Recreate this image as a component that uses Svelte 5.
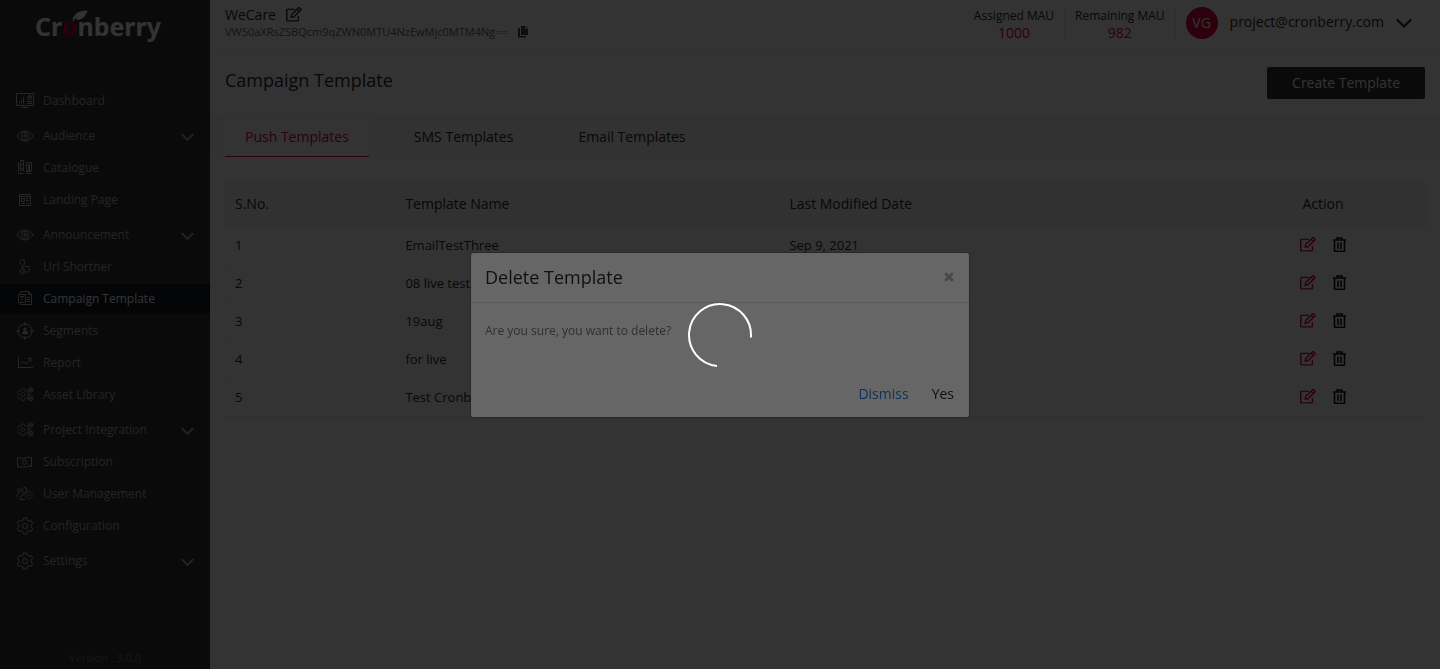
<script>
  const menu = [
    { label: 'Dashboard', icon: 'dashboard' },
    { label: 'Audience', icon: 'eye', group: true },
    { label: 'Catalogue', icon: 'catalogue' },
    { label: 'Landing Page', icon: 'landing' },
    { label: 'Announcement', icon: 'eye', group: true },
    { label: 'Url Shortner', icon: 'link' },
    { label: 'Campaign Template', icon: 'template', active: true },
    { label: 'Segments', icon: 'segments' },
    { label: 'Report', icon: 'report' },
    { label: 'Asset Library', icon: 'gears' },
    { label: 'Project Integration', icon: 'gears', group: true },
    { label: 'Subscription', icon: 'money' },
    { label: 'User Management', icon: 'users' },
    { label: 'Configuration', icon: 'gear' },
    { label: 'Settings', icon: 'gear', group: true }
  ];

  const tabs = ['Push Templates', 'SMS Templates', 'Email Templates'];
  let activeTab = $state(0);

  const rows = [
    { name: 'EmailTestThree', date: 'Sep 9, 2021' },
    { name: '08 live testing', date: '' },
    { name: '19aug', date: '' },
    { name: 'for live', date: '' },
    { name: 'Test Cronberry', date: '' }
  ];
</script>

{#snippet chevron()}
  <svg class="chevron" viewBox="0 0 16 10" aria-hidden="true"><path d="M1 1.500 8 8.500l7-7" /></svg>
{/snippet}

{#snippet pencil()}
  <svg class="pencil" viewBox="0 0 17 16" aria-hidden="true">
    <path d="M9.500 2.500H1.600a.8.8 0 0 0-.8.8V14a.8.8 0 0 0 .8.8h10.800a.8.8 0 0 0 .8-.8V9.500" />
    <path d="M5.500 10.800 6 8l7.200-7a1 1 0 0 1 1.400 0l1 1a1 1 0 0 1 0 1.400L8.400 10.400ZM11.800 2.500l2.400 2.400" />
  </svg>
{/snippet}

{#snippet cog()}
  <path d="M7.400 1h3.200l.5 2.300 1.800 1 2.200-.8 1.600 2.800L15 8v2l1.700 1.700-1.600 2.800-2.200-.8-1.800 1-.5 2.300H7.400l-.5-2.300-1.800-1-2.200.8-1.600-2.800L3 10V8L1.300 6.300l1.600-2.800 2.200.8 1.800-1Z" />
  <circle cx="9" cy="9" r="2.600" />
{/snippet}

{#snippet menuIcon(name)}
  <svg class="menu-icon" viewBox="0 0 18 18" aria-hidden="true">
    {#if name === 'dashboard'}
      <path d="M.5 1.500h17v12H.5ZM5.500 15.500h7M3.500 11.500v-2M5.500 11.500V8M7.500 11.500V5M11 9.500h5M11 11.500h5" />
      <circle cx="13.500" cy="5.500" r="2" /><path d="M13.500 3.500v2h2" />
    {:else if name === 'eye'}
      <path d="M1 9c2.200-3.300 4.900-5 8-5s5.800 1.700 8 5c-2.200 3.300-4.900 5-8 5s-5.800-1.700-8-5Z" />
      <circle cx="9" cy="9" r="3.800" /><circle cx="9" cy="9" r="1.200" /><path d="M9 6.500v2.300h2.500" />
    {:else if name === 'catalogue'}
      <path d="M4.500 1.500h3v10h-3ZM2.500 3.500v9M10.500 3.500h5v8h-5ZM12.500 5.500h1v5h-1ZM2 14.500h5.500M10 14.500h5.500M4.500 5.500h2M4.500 9.500h2M10 12.500h5" />
    {:else if name === 'landing'}
      <path d="M3.500 3.500h11v11h-11ZM3.500 5.500h11M5.500 7.500h3v3h-3ZM10 7.500h3M10 9.500h3M5.500 12.500h3M10 12.500h3" />
    {:else if name === 'link'}
      <path d="M5 6.500C3 6 3.500 3 5.500 2S9 3 8.500 5 6 8 6 8M8.500 8.500h4c1 0 1.500 4-1 5.500-2 1-3-.5-3-1.500M5 8.500c2 0 3 1 3 3.500s-.5 4.500-2 4.500-1.500-2-1.500-3.500.5-2 2-2" />
    {:else if name === 'template'}
      <path d="M4.500 3.500v-2h8l3 3v10h-11v-1M12.500 1.500v3h3M2.500 4.500h7v8h-7ZM4 6.500h4M6 6.500v4.500M11 7.500h3M11 9.500h3M11 11.500h3" />
    {:else if name === 'segments'}
      <circle cx="9" cy="9" r="7" /><path d="M9 0v4M9 14v4M0 9h4M14 9h4" />
      <path class="filled" d="M6 12c0-2 1-3.200 3-3.200s3 1.200 3 3.200ZM9 5.300a1.600 1.600 0 1 1 0 3.200 1.600 1.600 0 0 1 0-3.200Z" />
    {:else if name === 'report'}
      <path d="M2.500 3v10.500H17M5 10l2.500-2.500L10 10l4.500-5M11.500 4.500H15V8" />
    {:else if name === 'gears'}
      <g transform="translate(.5 2.200) scale(.72)">{@render cog()}</g>
      <circle cx="14.800" cy="4" r="2.200" /><circle cx="14.800" cy="4" r=".7" />
      <circle cx="14.800" cy="12.500" r="2.200" /><circle cx="14.800" cy="12.500" r=".7" /><path d="M12 8.500h3" />
    {:else if name === 'money'}
      <path d="M1.500 5c3-.8 5 1 8 0s4.500-1 6-.5v9c-2.500-.8-4.500 0-6.500.5s-5-.5-7.500 0Z" /><circle cx="8.500" cy="9.200" r="2" />
    {:else if name === 'users'}
      <circle cx="3" cy="5.500" r="1.600" /><circle cx="8.500" cy="5" r="2.500" />
      <path d="M3 8.500C1.500 8.500 1 10 1 12M4 14.500c0-3 1.500-5 5-5M4 14.500h5" />
      <g transform="translate(8.500 5.500) scale(.5)">{@render cog()}</g>
    {:else}
      {@render cog()}
    {/if}
  </svg>
{/snippet}

<div class="app">
  <aside>
    <a class="logo" href="#home" aria-label="Cronberry">
      Cr<span class="berry">o<svg viewBox="0 0 16 12" aria-hidden="true"><path d="M.5 10.500C1.500 4 7 .5 15.500.5 14 6 10 10.500 3.500 9.500L6 6.500 2 9.500 1 12Z" /></svg></span>nberry
    </a>
    <nav>
      {#each menu as item}
        <a href="#menu" class={{ item: true, active: item.active, group: item.group }}>
          {@render menuIcon(item.icon)}
          <span>{item.label}</span>
          {#if item.group}{@render chevron()}{/if}
        </a>
      {/each}
    </nav>
    <p class="version">Version : 3.0.0</p>
  </aside>

  <main>
    <header>
      <div class="project">
        <div class="project-name">WeCare <button aria-label="Rename project">{@render pencil()}</button></div>
        <div class="project-key">
          VW50aXRsZSBQcm9qZWN0MTU4NzEwMjc0MTM4Ng==
          <button aria-label="Copy key">
            <svg class="copy" viewBox="0 0 10 12" aria-hidden="true"><path d="M3 0h4v3h3v6H3ZM7.700 0 10 2.300H7.700ZM0 2h2v8h6v1.500H0Z" /></svg>
          </button>
        </div>
      </div>
      <dl>
        <div><dt>Assigned MAU</dt><dd>1000</dd></div>
        <div><dt>Remaining MAU</dt><dd>982</dd></div>
      </dl>
      <button class="account">
        <span class="avatar">VG</span>
        <span class="email">project@cronberry.com</span>
        {@render chevron()}
      </button>
    </header>

    <section class="heading">
      <h1>Campaign Template</h1>
      <button class="create">Create Template</button>
    </section>

    <div class="tabs" role="tablist">
      {#each tabs as tab, i}
        <button role="tab" aria-selected={activeTab === i} class={{ selected: activeTab === i }} onclick={() => (activeTab = i)}>{tab}</button>
      {/each}
    </div>

    <div class="table-wrap">
      <table>
        <thead>
          <tr><th class="number">S.No.</th><th class="name">Template Name</th><th>Last Modified Date</th><th class="action">Action</th></tr>
        </thead>
        <tbody>
          {#each rows as row, i}
            <tr>
              <td>{i + 1}</td>
              <td>{row.name}</td>
              <td>{row.date}</td>
              <td class="action">
                <div class="actions">
                  <button class="edit" aria-label="Edit template">{@render pencil()}</button>
                  <button class="delete" aria-label="Delete template">
                    <svg class="trash" viewBox="0 0 13 15" aria-hidden="true"><path d="M0 3h13M4 2.500V1h5v1.500M1.500 3.500v10q0 .8.8.8h8.400q.8 0 .8-.8v-10M5 5.500v6.500M8 5.500v6.500" /></svg>
                  </button>
                </div>
              </td>
            </tr>
          {/each}
        </tbody>
      </table>
    </div>
  </main>
</div>

<div class="backdrop">
  <div class="modal" role="dialog" aria-modal="true" aria-labelledby="dialog-title">
    <div class="modal-head">
      <h2 id="dialog-title">Delete Template</h2>
      <button class="close" aria-label="Close">
        <svg viewBox="0 0 10 10" aria-hidden="true"><path d="m1.200 1.200 7.600 7.600M8.800 1.200 1.200 8.800" /></svg>
      </button>
    </div>
    <p>Are you sure, you want to delete?</p>
    <div class="modal-foot">
      <button class="dismiss">Dismiss</button>
      <button>Yes</button>
    </div>
  </div>
</div>

<div class="loading" role="status" aria-label="Loading">
  <svg viewBox="0 0 66 66" aria-hidden="true"><path d="M30 63.900A31 31 0 1 1 63.900 35.500" /></svg>
</div>

<style>
  :global(body) {
    margin: 0;
    background: #fff;
    color: #2a2a2a;
    font-family: 'Open Sans', sans-serif;
    font-size: 14px;
    line-height: 20px;
  }

  * {
    box-sizing: border-box;
  }

  button {
    padding: 0;
    border: 0;
    background: none;
    color: inherit;
    font: inherit;
    cursor: pointer;
  }

  a {
    color: inherit;
    text-decoration: none;
  }

  h1,
  h2,
  p,
  dl,
  dd {
    margin: 0;
    font-weight: 400;
  }

  svg {
    display: block;
    fill: none;
    stroke: currentColor;
  }

  .app {
    display: flex;
    min-height: 100vh;
  }

  aside {
    display: flex;
    flex-direction: column;
    flex: 0 0 210px;
    background: #333;
    color: #b4b4b4;
    font-size: 12px;
  }

  .logo {
    padding: 10px 0 0 35px;
    color: #fff;
    font-family: 'Noto Sans', sans-serif;
    font-size: 25px;
    font-weight: 700;
    line-height: 32px;
  }

  .berry {
    position: relative;
    color: #d4003c;
  }

  .berry svg {
    position: absolute;
    top: 1px;
    left: 10px;
    width: 16px;
    fill: #fff;
    stroke: none;
  }

  nav {
    display: flex;
    flex-direction: column;
    gap: 2px;
    padding-top: 44px;
  }

  .item {
    display: flex;
    align-items: center;
    gap: 9px;
    height: 30px;
    padding: 0 16px;
  }

  .item.group {
    margin-top: 3px;
  }

  .item.active {
    background: #151b24;
    color: #fff;
  }

  .item .chevron {
    width: 13px;
    margin-top: 2px;
    margin-left: auto;
  }

  .menu-icon {
    width: 18px;
    height: 18px;
    color: #c4c4c4;
    overflow: visible;
  }

  .filled {
    fill: currentColor;
    stroke: none;
  }

  .version {
    margin-top: auto;
    padding-bottom: 1px;
    color: #707070;
    font-size: 11px;
    text-align: center;
  }

  .chevron {
    width: 16px;
    stroke-width: 2.2;
  }

  main {
    flex: 1;
    min-width: 0;
  }

  header {
    display: flex;
    align-items: flex-start;
    height: 50px;
    padding: 6px 28px 0 15px;
    border-bottom: 1px solid #eee;
  }

  .project {
    margin-right: auto;
  }

  .project-name,
  .project-key {
    display: flex;
    align-items: center;
    gap: 10px;
  }

  .project-name {
    height: 18px;
  }

  .project-key {
    height: 16px;
    color: #666;
    font-size: 11px;
  }

  .pencil {
    width: 16px;
    stroke-width: 1.5;
  }

  .copy {
    width: 10px;
    fill: #444;
    stroke: none;
  }

  dl {
    display: flex;
    text-align: center;
  }

  dl div {
    height: 38px;
    padding: 1px 10px 0;
    border-right: 1px solid #eee;
  }

  dt {
    font-size: 12px;
    line-height: 18px;
  }

  dd {
    color: #dc0042;
    line-height: 16px;
  }

  .account {
    display: flex;
    align-items: center;
    gap: 12px;
    padding: 1px 0 0 10px;
  }

  .avatar {
    width: 32px;
    height: 32px;
    border-radius: 50%;
    background: #dc0042;
    color: #fff;
    line-height: 32px;
  }

  .email {
    padding-bottom: 2px;
  }

  .heading {
    display: flex;
    align-items: center;
    justify-content: space-between;
    height: 66px;
    padding: 0 15px;
  }

  h1,
  h2 {
    font-size: 18px;
    line-height: 24px;
  }

  .heading h1 {
    padding-bottom: 6px;
  }

  .create {
    padding: 6px 25px;
    border-radius: 2px;
    background: #333;
    color: #fff;
  }

  .tabs {
    display: flex;
    gap: 25px;
    padding: 0 15px;
    border-top: 1px solid #eaeaea;
    background: #f8f8f8;
  }

  .tabs button {
    padding: 10px 20px 9px;
    border-bottom: 1px solid transparent;
  }

  .tabs .selected {
    border-color: #dc0042;
    background: #fff;
    color: #dc0042;
  }

  .table-wrap {
    padding: 24px 15px;
  }

  table {
    width: 100%;
    border-collapse: collapse;
    box-shadow: 0 2px 4px rgba(0, 0, 0, 0.08);
    table-layout: fixed;
    text-align: left;
  }

  th {
    height: 45px;
    padding: 0 10px;
    background: #f4f4f4;
    font-weight: 400;
  }

  td {
    height: 38px;
    padding: 0 10px;
    border-bottom: 1px solid #f4f4f4;
    font-size: 13px;
  }

  .number {
    width: 14.2%;
  }

  .name {
    width: 32%;
  }

  .action {
    width: 17%;
    text-align: center;
  }

  .actions {
    display: flex;
    align-items: center;
    justify-content: center;
    gap: 17px;
  }

  .edit {
    color: #dc0042;
  }

  .delete {
    color: #111;
  }

  .trash {
    width: 13px;
    stroke-width: 1.6;
  }

  .backdrop,
  .loading {
    position: fixed;
    inset: 0;
    display: flex;
    align-items: center;
    justify-content: center;
    background: rgba(0, 0, 0, 0.5);
  }

  .modal {
    width: 500px;
    border: 1px solid rgba(0, 0, 0, 0.2);
    border-radius: 3px;
    background: #fff;
    background-clip: padding-box;
  }

  .modal-head {
    display: flex;
    align-items: center;
    justify-content: space-between;
    padding: 12px 15px 13px 14px;
    border-bottom: 1px solid #dee2e6;
  }

  .close {
    color: #b0b0b0;
  }

  .close svg {
    width: 10px;
    stroke-width: 2.6;
  }

  .modal p {
    padding: 18px 14px;
    color: #777;
    font-size: 12px;
  }

  .modal-foot {
    display: flex;
    justify-content: flex-end;
    gap: 23px;
    padding: 25px 15px 13px;
  }

  .dismiss {
    color: #2d78e6;
  }

  .loading {
    background: rgba(0, 0, 0, 0.6);
  }

  .loading svg {
    width: 66px;
    color: #fff;
    stroke-width: 2;
  }
</style>
